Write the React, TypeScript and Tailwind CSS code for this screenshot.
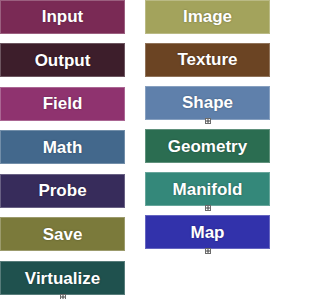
type Node = { label: string; color: string; expand?: boolean };

const left: Node[] = [
  { label: "Input", color: "bg-[#7a2a55]" },
  { label: "Output", color: "bg-[#3d1e2b]" },
  { label: "Field", color: "bg-[#8f336f]" },
  { label: "Math", color: "bg-[#43688c]" },
  { label: "Probe", color: "bg-[#372c5b]" },
  { label: "Save", color: "bg-[#7b7a3b]" },
  { label: "Virtualize", color: "bg-[#1f514e]", expand: true },
];

const right: Node[] = [
  { label: "Image", color: "bg-[#a3a35c]" },
  { label: "Texture", color: "bg-[#6b4423]" },
  { label: "Shape", color: "bg-[#5f80ab]", expand: true },
  { label: "Geometry", color: "bg-[#2b6d51]" },
  { label: "Manifold", color: "bg-[#34887a]", expand: true },
  { label: "Map", color: "bg-[#3232ab]", expand: true },
];

function ExpandIcon() {
  return (
    <span className="absolute left-1/2 top-full -ml-[3px] -mt-[0.5px] flex h-[6px] w-[6px] items-center justify-center border border-[#6b6b6b] bg-white">
      <svg width="4" height="4" viewBox="0 0 4 4" className="block">
        <path d="M2 0V4M0 2H4" stroke="#444" strokeWidth="1" />
      </svg>
    </span>
  );
}

function NodeBox({ node }: { node: Node }) {
  return (
    <div
      className={`relative flex h-[34px] w-[125px] items-center justify-center border border-white/25 ${node.color}`}
    >
      <span className="text-[17px] font-bold leading-none text-white [text-shadow:0_0_2px_rgba(0,0,0,0.35)]">
        {node.label}
      </span>
      {node.expand && <ExpandIcon />}
    </div>
  );
}

export default function App() {
  return (
    <div
      className="flex h-[299px] w-[271px] gap-[20px] overflow-hidden bg-white"
      style={{ fontFamily: '"Liberation Sans", Arial, sans-serif' }}
    >
      <div className="-mt-[0.5px] flex flex-col gap-[9.6px]">
        {left.map((n) => (
          <NodeBox key={n.label} node={n} />
        ))}
      </div>
      <div className="-mt-[0.5px] flex flex-col gap-[9.2px]">
        {right.map((n) => (
          <NodeBox key={n.label} node={n} />
        ))}
      </div>
    </div>
  );
}
